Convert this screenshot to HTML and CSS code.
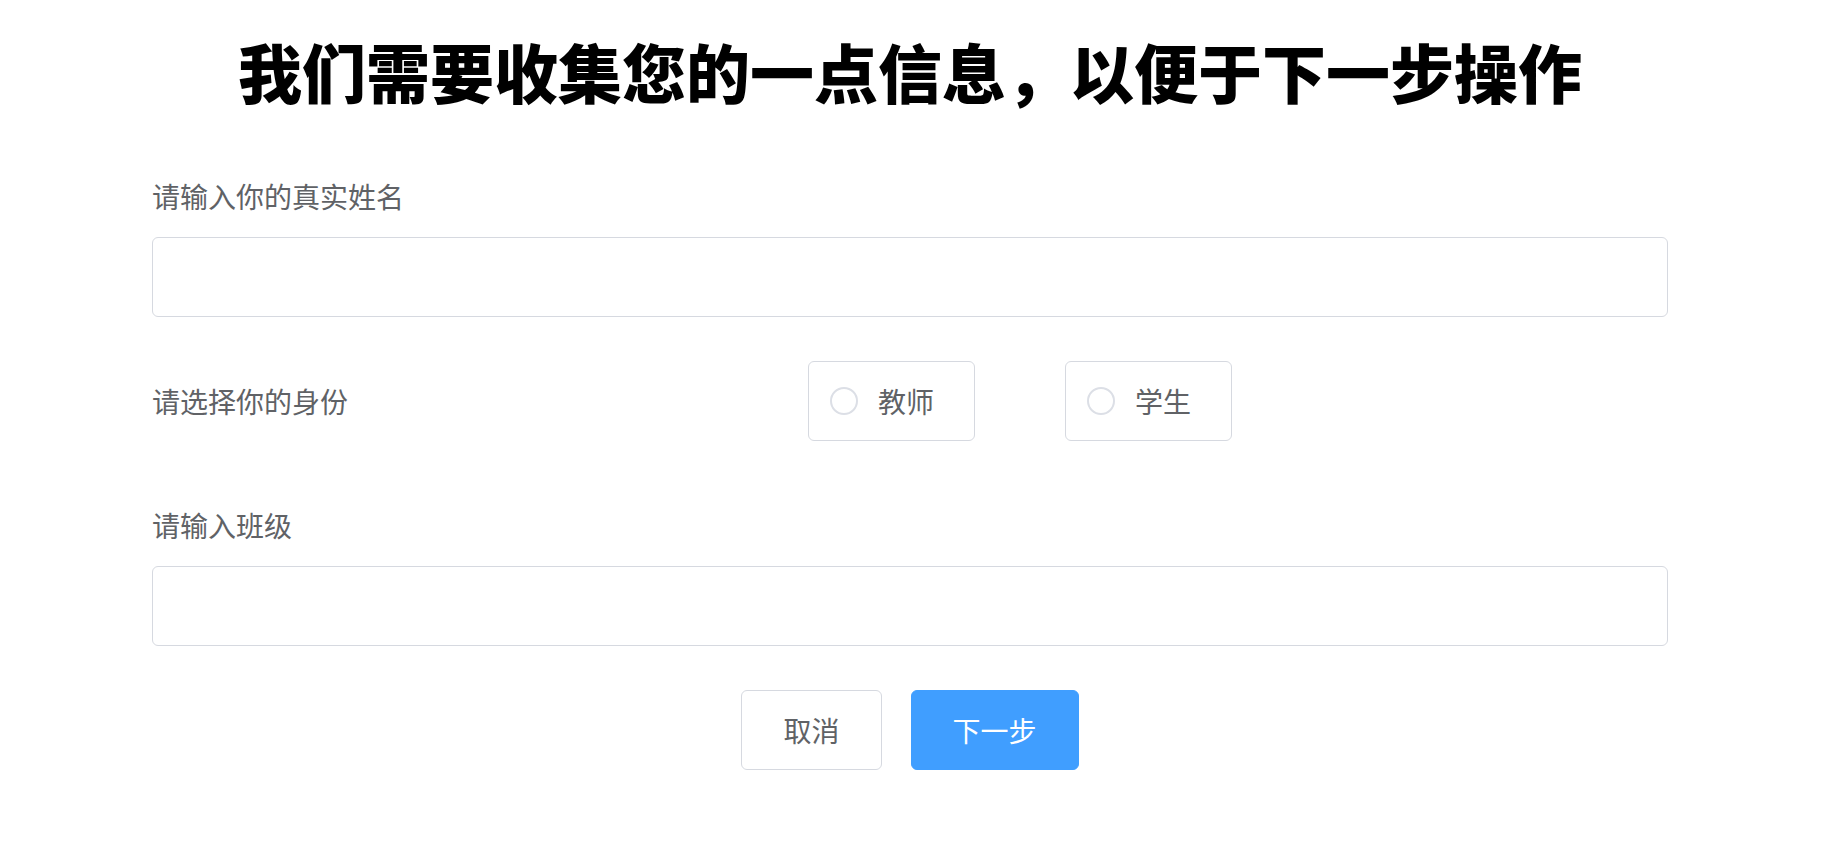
FILE: index.html
```html
<!DOCTYPE html>
<html lang="zh-CN">
<head>
    <meta charset="UTF-8">
    <meta name="viewport" content="width=device-width, initial-scale=1.0">
    <title>信息收集</title>
    <link rel="stylesheet" href="styles.css">
</head>
<body>
    <div class="page">
        <h1 class="title">我们需要收集您的一点信息，以便于下一步操作</h1>

        <form class="info-form" onsubmit="return false">
            <div class="form-item">
                <label class="form-label" for="realName">请输入你的真实姓名</label>
                <input class="form-input" id="realName" type="text">
            </div>

            <div class="form-item role-row">
                <span class="form-label role-label">请选择你的身份</span>
                <div class="radio-group">
                    <label class="radio-box">
                        <input type="radio" name="role" value="teacher">
                        <span class="radio-circle"></span>
                        <span class="radio-text">教师</span>
                    </label>
                    <label class="radio-box">
                        <input type="radio" name="role" value="student">
                        <span class="radio-circle"></span>
                        <span class="radio-text">学生</span>
                    </label>
                </div>
            </div>

            <div class="form-item class-item">
                <label class="form-label" for="className">请输入班级</label>
                <input class="form-input" id="className" type="text">
            </div>

            <div class="button-container">
                <button class="button" type="button">取消</button>
                <button class="button button-primary" type="submit">下一步</button>
            </div>
        </form>
    </div>
</body>
</html>
```

FILE: styles.css
```css
body {
    margin: 0;
    padding: 0;
    background-color: #fff;
    font-family: "Noto Sans CJK SC", "Noto Sans", sans-serif;
}

.page {
    padding: 38px 177px 0 152px;
}

.title {
    margin: 0;
    font-size: 64px;
    line-height: 64px;
    font-weight: 900;
    color: #000;
    text-align: center;
}

.info-form {
    margin-top: 80px;
}

.form-label {
    display: block;
    font-size: 28px;
    line-height: 28px;
    color: #606266;
}

.form-input {
    display: block;
    box-sizing: border-box;
    width: 100%;
    height: 80px;
    margin-top: 27px;
    padding: 0 30px;
    border: 1px solid #d6d9e0;
    border-radius: 6px;
    font-size: 28px;
    color: #606266;
    outline: none;
}

.form-input:focus {
    border-color: #409eff;
}

.role-row {
    display: flex;
    align-items: center;
    margin-top: 44px;
}

.role-label {
    width: 656px;
}

.radio-group {
    display: flex;
    gap: 90px;
}

.radio-box {
    display: flex;
    align-items: center;
    box-sizing: border-box;
    height: 80px;
    padding: 0 40px 0 21px;
    border: 1px solid #d6d9e0;
    border-radius: 6px;
    cursor: pointer;
}

.radio-box input {
    display: none;
}

.radio-circle {
    box-sizing: border-box;
    width: 28px;
    height: 28px;
    border: 2px solid #dcdfe6;
    border-radius: 50%;
    background-color: #fff;
}

.radio-box input:checked + .radio-circle {
    border: 9px solid #409eff;
}

.radio-text {
    margin-left: 20px;
    font-size: 28px;
    line-height: 28px;
    color: #606266;
}

.class-item {
    margin-top: 70px;
}

.button-container {
    display: flex;
    justify-content: center;
    gap: 29px;
    margin-top: 44px;
}

.button {
    height: 80px;
    padding: 0 41px;
    border: 1px solid #d6d9e0;
    border-radius: 6px;
    background-color: #fff;
    color: #606266;
    font-family: inherit;
    font-size: 28px;
    line-height: 28px;
    cursor: pointer;
}

.button-primary {
    background-color: #409eff;
    border-color: #409eff;
    color: #fff;
}

.button-primary:hover {
    background-color: #66b1ff;
}
```
